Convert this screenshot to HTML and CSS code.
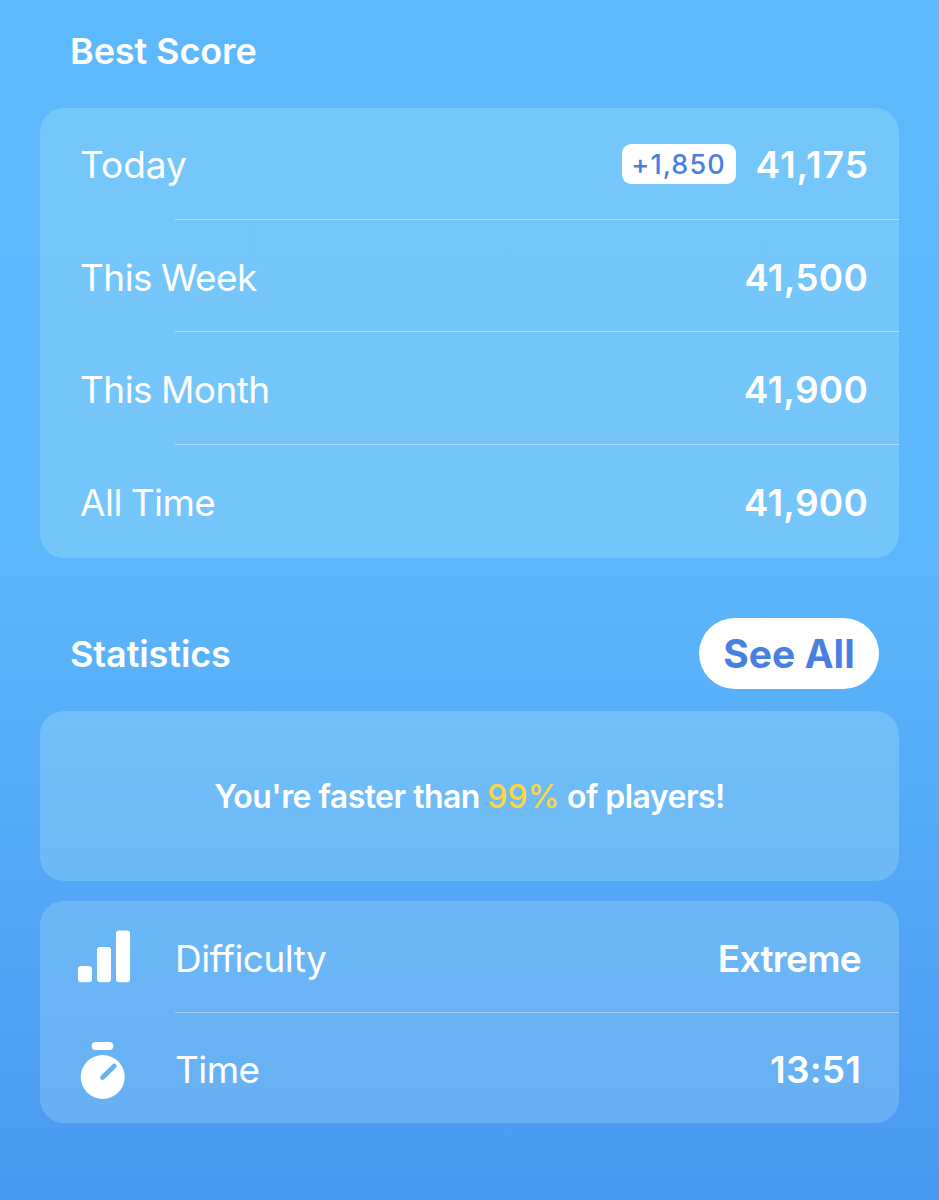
FILE: index.html
```html
<!DOCTYPE html>
<html lang="en">
<head>
  <meta charset="UTF-8">
  <meta name="viewport" content="width=device-width, initial-scale=1.0">
  <title>Statistics</title>
  <link rel="stylesheet" href="styles.css">
</head>
<body>
  <main class="container">
    <header class="section-header">
      <h2>Best Score</h2>
    </header>

    <section class="card scores">
      <div class="row today">
        <span class="label">Today</span>
        <span class="badge">+1,850</span>
        <span class="value">41,175</span>
      </div>
      <hr>
      <div class="row">
        <span class="label">This Week</span>
        <span class="value">41,500</span>
      </div>
      <hr>
      <div class="row">
        <span class="label">This Month</span>
        <span class="value">41,900</span>
      </div>
      <hr>
      <div class="row">
        <span class="label">All Time</span>
        <span class="value">41,900</span>
      </div>
    </section>

    <header class="section-header stats-header">
      <h2>Statistics</h2>
      <button class="see-all">See All</button>
    </header>

    <section class="card message">
      <p>You're faster than <span class="percent">99%</span> of players!</p>
    </section>

    <section class="card details">
      <div class="row">
        <svg class="icon" viewBox="0 0 60 60">
          <rect x="3" y="35" width="14" height="16.300" rx="3"/>
          <rect x="22" y="16" width="14" height="35.300" rx="3"/>
          <rect x="41" y="-0.500" width="14" height="51.800" rx="3"/>
        </svg>
        <span class="label">Difficulty</span>
        <span class="value level">Extreme</span>
      </div>
      <hr>
      <div class="row">
        <svg class="icon" viewBox="0 0 60 60">
          <defs>
            <mask id="hand">
              <rect width="60" height="60" fill="#fff"/>
              <path d="M27.500 35.500L39.300 24" stroke="#000" stroke-width="4.800" stroke-linecap="round"/>
            </mask>
          </defs>
          <rect x="16.700" y="0" width="21.600" height="8" rx="4"/>
          <circle cx="27.700" cy="35" r="22" mask="url(#hand)"/>
        </svg>
        <span class="label">Time</span>
        <span class="value">13:51</span>
      </div>
    </section>
  </main>
</body>
</html>
```

FILE: styles.css
```css
* {
  box-sizing: border-box;
  margin: 0;
  padding: 0;
}
body {
  font-family: Inter, 'Liberation Sans', sans-serif;
  color: #fff;
  background: linear-gradient(#5eb8fc 0, #5db7fb 550px, #4a99f1 1200px) no-repeat;
  height: 1200px;
}
.container {
  width: 939px;
  padding: 0 40px;
}
.section-header {
  display: flex;
  justify-content: space-between;
  align-items: center;
  height: 108px;
  padding: 0 20px 6px 30px;
}
h2 {
  font-size: 36px;
  font-weight: 600;
  line-height: 44px;
  letter-spacing: -0.1px;
}
.stats-header {
  height: 153px;
  padding-top: 38px;
  padding-bottom: 0;
}
.see-all {
  width: 180px;
  height: 71px;
  border: none;
  border-radius: 36px;
  background: #fff;
  color: #4780e0;
  font-family: inherit;
  font-size: 39px;
  font-weight: 700;
}
.card {
  background: rgba(209, 254, 252, 0.2);
  border-radius: 24px;
}
.row {
  display: flex;
  align-items: center;
  height: 111px;
  padding: 3px 31px 0 40px;
}
.scores .row:nth-of-type(n+3) {
  height: 112px;
}
.scores .row:last-child {
  height: 113px;
  padding-top: 2px;
}
hr {
  border: none;
  height: 1px;
  margin-left: 135px;
  background: rgba(255, 255, 255, 0.38);
}
.label {
  flex: 1;
  font-size: 37px;
  font-weight: 400;
  letter-spacing: -0.55px;
  word-spacing: -1px;
}
.value {
  font-size: 37px;
  font-weight: 600;
  letter-spacing: 0.2px;
}
.today {
  padding: 2px 30px 0 40px;
}
.today .label {
  letter-spacing: 0;
}
.today .value {
  letter-spacing: 1px;
}
.badge {
  width: 114px;
  height: 40px;
  margin: 0 20px 1px 0;
  border-radius: 9px;
  background: #fff;
  color: #4780e0;
  font-size: 27px;
  font-weight: 500;
  line-height: 41px;
  letter-spacing: 1.1px;
  text-align: center;
}
.message {
  display: flex;
  justify-content: center;
  align-items: center;
  height: 170px;
  margin-bottom: 20px;
}
.message p {
  font-size: 32px;
  font-weight: 600;
  letter-spacing: -0.55px;
}
.percent {
  color: #fcd83e;
  font-weight: 500;
  letter-spacing: 0;
}
.details .row {
  padding: 3px 38px 0 35px;
}
.details .row:last-child {
  height: 110px;
}
.details .value.level {
  letter-spacing: -0.7px;
}
.icon {
  width: 60px;
  height: 60px;
  margin: 5px 40px 0 0;
  fill: #fff;
  overflow: visible;
}
```
